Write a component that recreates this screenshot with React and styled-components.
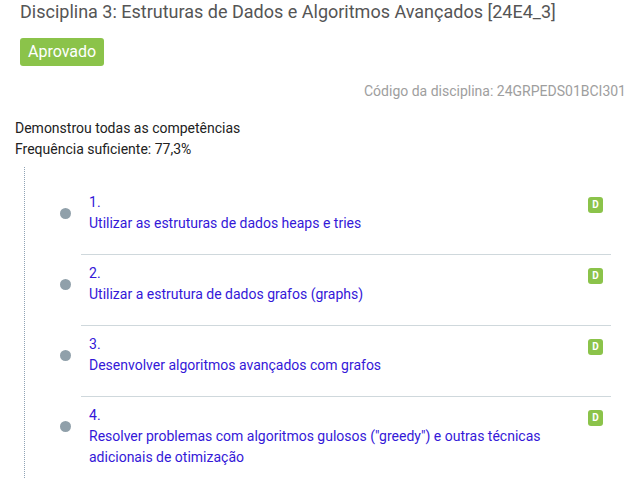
import React from "react";
import styled, { createGlobalStyle } from "styled-components";

const GlobalStyle = createGlobalStyle`
  body {
    margin: 0;
    background: #fff;
    font-family: Roboto, "Liberation Sans", Arial, sans-serif;
  }
`;

// start Header
const Page = styled.div`
  padding: 1px 15px 0 15px;
`;

const Title = styled.h1`
  margin: 0 0 0 5px;
  font-size: 18px;
  line-height: 21px;
  font-weight: 400;
  color: #555;
`;

const Status = styled.span`
  display: inline-block;
  margin: 16px 0 0 5px;
  padding: 0 8px;
  height: 28px;
  line-height: 28px;
  font-size: 16px;
  color: #fff;
  background-color: #8bc34a;
  border-radius: 3px;
`;

const Code = styled.div`
  margin-top: 17px;
  text-align: right;
  font-size: 14px;
  line-height: 16px;
  color: #9e9e9e;
`;

const Summary = styled.div`
  margin-top: 19px;
  font-size: 14px;
  line-height: 21px;
  color: #222;
`;
// end Header

// start List
const List = styled.ul`
  margin: 7px 0 0 9px;
  padding: 17px 15px 0 0;
  list-style: none;
  border-left: 1px dotted #8fa3b5;
`;

const Item = styled.li`
  display: flex;
  align-items: flex-start;
`;

const Bullet = styled.span`
  flex: 0 0 auto;
  width: 11px;
  height: 11px;
  margin: 24px 10px 0 35px;
  border-radius: 50%;
  background-color: #90a0aa;
`;

const Body = styled.div`
  flex: 1;
  display: flex;
  justify-content: space-between;
  align-items: flex-start;
  gap: 12px;
  padding: 8px 8px 20px 8px;
  border-bottom: ${(props) => (props.last ? "none" : "1px solid #cfd8dc")};
`;

const Text = styled.div`
  font-size: 14px;
  line-height: 21px;
  color: #3418d8;
`;

const Grade = styled.span`
  flex: 0 0 auto;
  margin-top: 5px;
  width: 15px;
  height: 16px;
  line-height: 16px;
  text-align: center;
  font-size: 10px;
  font-weight: 700;
  color: #fff;
  background-color: #8bc34a;
  border-radius: 3px;
`;
// end List

const items = [
  "Utilizar as estruturas de dados heaps e tries",
  "Utilizar a estrutura de dados grafos (graphs)",
  "Desenvolver algoritmos avançados com grafos",
  'Resolver problemas com algoritmos gulosos ("greedy") e outras técnicas adicionais de otimização',
];

const App = () => {
  return (
    <Page>
      <GlobalStyle />
      <Title>Disciplina 3: Estruturas de Dados e Algoritmos Avançados [24E4_3]</Title>
      <Status>Aprovado</Status>
      <Code>Código da disciplina: 24GRPEDS01BCI301</Code>
      <Summary>
        <div>Demonstrou todas as competências</div>
        <div>Frequência suficiente: 77,3%</div>
      </Summary>
      <List>
        {items.map((text, index) => (
          <Item key={index}>
            <Bullet />
            <Body last={index === items.length - 1}>
              <Text>
                <div>{index + 1}.</div>
                <div>{text}</div>
              </Text>
              <Grade>D</Grade>
            </Body>
          </Item>
        ))}
      </List>
    </Page>
  );
};

export default App;
